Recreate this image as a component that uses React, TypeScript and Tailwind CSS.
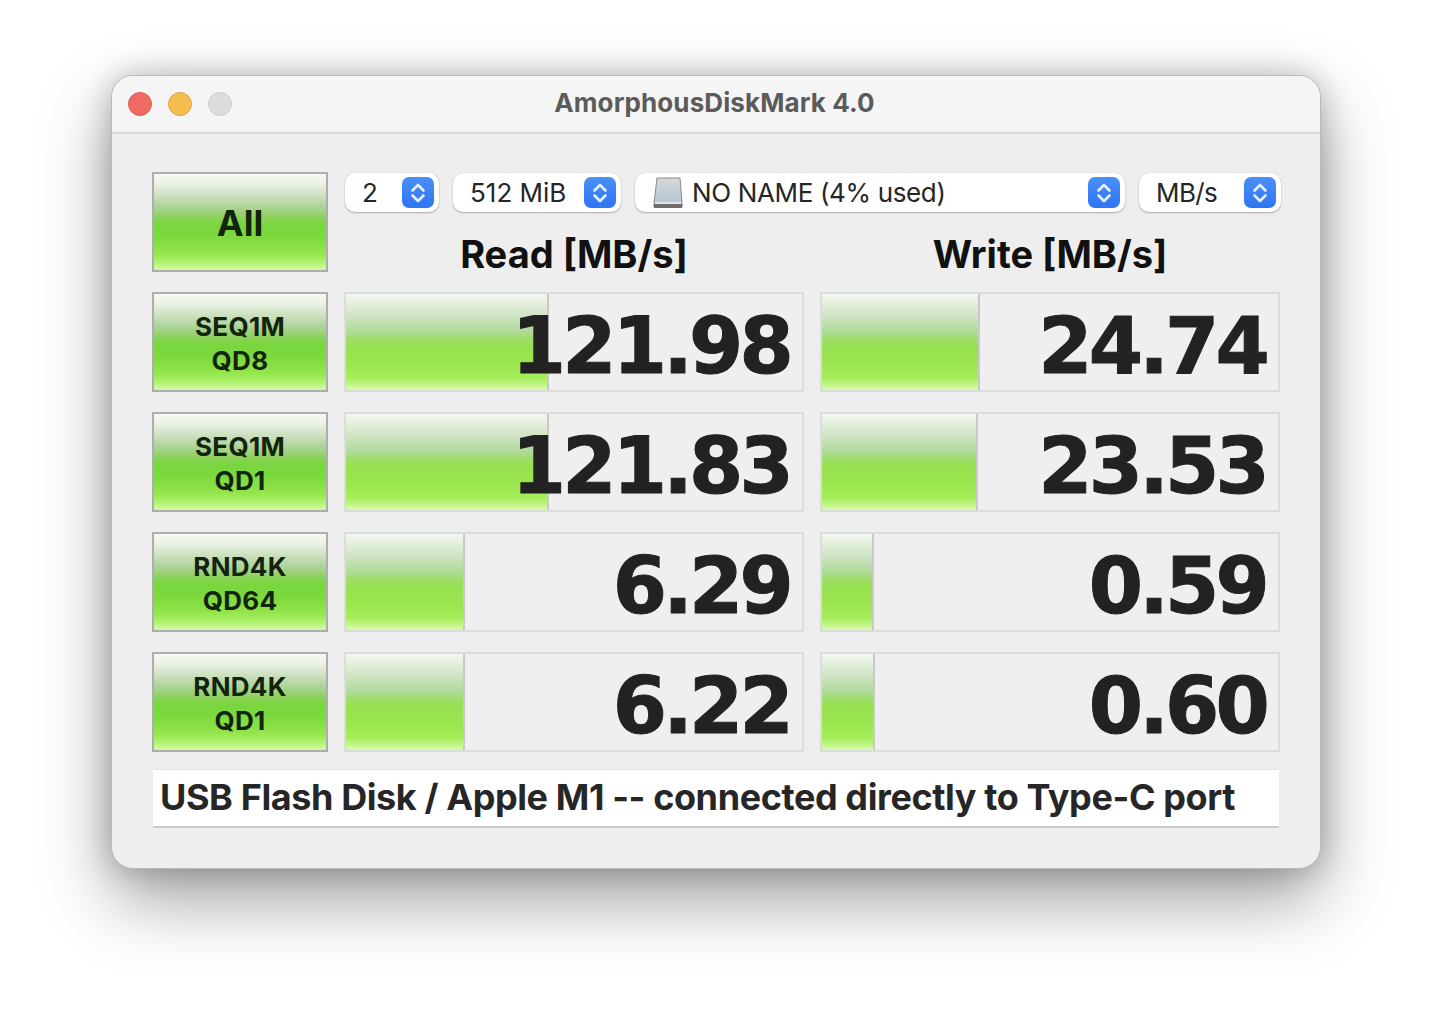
const sans = "font-['Inter','Liberation_Sans',sans-serif]";
const grad =
  "linear-gradient(to bottom,#f6f9f4 0%,#e8f1e2 10%,#c8deba 24%,#add49a 34%,#97d06c 42%,#7ad63e 52%,#7cd83e 64%,#8fe348 80%,#a8ee62 90%,#d8fbaa 100%)";
const barGrad =
  "linear-gradient(to bottom,#f4f7f1 0%,#e4efdd 10%,#cae1bc 26%,#b2da9c 38%,#a0dc70 46%,#96e050 54%,#9ae64e 72%,#a8ee5c 88%,#dafbb0 100%)";

function Stepper() {
  return (
    <span className="w-[32px] h-[31px] rounded-[7px] bg-gradient-to-b from-[#4a90f8] to-[#2f74f2] flex items-center justify-center">
      <svg width="20" height="26" viewBox="0 0 20 26" fill="none" stroke="#e6f0ff" strokeWidth="2.6" strokeLinecap="round" strokeLinejoin="round">
        <path d="M4.5 10.5 L10 5 L15.5 10.5" />
        <path d="M4.5 15.5 L10 21 L15.5 15.5" />
      </svg>
    </span>
  );
}

function Select({ w, pl, children }: { w: string; pl: string; children: React.ReactNode }) {
  return (
    <div className={`${w} ${pl} h-[39px] bg-white rounded-[10px] shadow-[0_1px_2px_rgba(0,0,0,0.28),0_0_1px_rgba(0,0,0,0.12)] flex items-center justify-between pr-[5px] text-[26px] text-[#262626]`}>
      <span className="flex items-center whitespace-nowrap">{children}</span>
      <Stepper />
    </div>
  );
}

function Btn({ a, b, big }: { a: string; b?: string; big?: boolean }) {
  return (
    <div
      className={`h-[100px] w-[176px] border-2 border-[#adadad] flex flex-col items-center justify-center font-bold text-[#12240c] ${big ? "text-[36px] pt-[2px]" : "text-[26px] leading-[34px] pt-[4px] tracking-[0.3px]"}`}
      style={{ backgroundImage: grad }}
    >
      <span>{a}</span>
      {b && <span>{b}</span>}
    </div>
  );
}

function Meter({ bar, value }: { bar: number; value: string }) {
  return (
    <div className="relative h-[100px] w-[460px] bg-[#efefef] border-2 border-[#dcdcdc]">
      <div
        className="absolute left-0 top-0 bottom-0 border-r-2 border-[#c9c9c9]"
        style={{ width: bar, backgroundImage: barGrad }}
      />
      <div className="relative h-full flex items-center justify-end pr-[12px] pt-[8px] font-['DejaVu_Sans',sans-serif] font-bold text-[78px] leading-none text-[#222222] tracking-[-3.8px] [-webkit-text-stroke:1px_#222222]">
        {value}
      </div>
    </div>
  );
}

function Row({ a, b, r, rw, w, ww }: { a: string; b: string; r: string; rw: number; w: string; ww: number }) {
  return (
    <div className="flex gap-4">
      <Btn a={a} b={b} />
      <Meter bar={rw} value={r} />
      <Meter bar={ww} value={w} />
    </div>
  );
}

export default function App() {
  return (
    <div className={`${sans} w-[1432px] h-[1016px] bg-white pt-[75px] pl-[111px] overflow-hidden`}>
      <div className="w-[1210px] h-[794px] rounded-[22px] bg-[#eeeeee] border border-[#b9b9b9] shadow-[0_30px_70px_rgba(0,0,0,0.38),0_0_30px_rgba(0,0,0,0.22)] overflow-hidden">
        <div className="relative h-[58px] bg-[#f5f5f5] border-b-2 border-[#d8d8d8] flex items-center justify-center">
          <div className="absolute left-[16px] top-[16px] flex gap-[16px]">
            <span className="w-[24px] h-[24px] rounded-full bg-[#f06a61] border border-[#dc5a52]" />
            <span className="w-[24px] h-[24px] rounded-full bg-[#f6bd4f] border border-[#dfa63f]" />
            <span className="w-[24px] h-[24px] rounded-full bg-[#dcdcdc] border border-[#cccccc]" />
          </div>
          <span className="text-[26px] font-bold text-[#5b5b5b] -mt-[3px] mr-[3px] tracking-[0.1px]">AmorphousDiskMark 4.0</span>
        </div>
        <div className="pl-[40px] pt-[38px] flex flex-col gap-5">
          <div className="flex gap-4 h-[100px]">
            <Btn a="All" big />
            <div className="flex flex-col">
              <div className="flex gap-[14px] pl-[1px] mt-[1px]">
                <Select w="w-[94px]" pl="pl-[17px]">2</Select>
                <Select w="w-[168px]" pl="pl-[17px]">512 MiB</Select>
                <Select w="w-[490px]" pl="pl-[17px]">
                  <svg width="32" height="34" viewBox="0 0 32 34" className="mr-[8px]">
                    <defs>
                      <linearGradient id="d" x1="0" y1="0" x2="0" y2="1">
                        <stop offset="0" stopColor="#d8d8d8" />
                        <stop offset="1" stopColor="#b4c6d6" />
                      </linearGradient>
                    </defs>
                    <path d="M5 2 H28 L30 27 H2 Z" fill="url(#d)" stroke="#8a8a8a" strokeWidth="1" />
                    <rect x="1.5" y="27" width="29" height="5" rx="1.5" fill="#6f6f6f" />
                    <rect x="3" y="26" width="26" height="2" fill="#e6e6e6" />
                  </svg>
                  <span className="tracking-[-0.35px]">NO NAME (4% used)</span>
                </Select>
                <Select w="w-[142px]" pl="pl-[17px]"><span className="tracking-[-0.6px]">MB/s</span></Select>
              </div>
              <div className="flex gap-4 mt-[19px]">
                <div className="w-[460px] text-center text-[38px] leading-[46px] font-bold text-[#111111] tracking-[0px]">Read [MB/s]</div>
                <div className="w-[460px] text-center text-[38px] leading-[46px] font-bold text-[#111111] tracking-[0px]">Write [MB/s]</div>
              </div>
            </div>
          </div>
          <Row a="SEQ1M" b="QD8" r="121.98" rw={203} w="24.74" ww={158} />
          <Row a="SEQ1M" b="QD1" r="121.83" rw={203} w="23.53" ww={156} />
          <Row a="RND4K" b="QD64" r="6.29" rw={119} w="0.59" ww={52} />
          <Row a="RND4K" b="QD1" r="6.22" rw={119} w="0.60" ww={53} />
          <div className="-mt-[3px] ml-[1px] w-[1126px] h-[59px] bg-white border-t border-t-[#e2e2e2] border-b-2 border-b-[#c8c8c8] pl-[7px] pb-[2px] flex items-center text-[36px] font-bold text-[#262626] tracking-[-0.4px] whitespace-nowrap">
            USB Flash Disk / Apple M1 -- connected directly to Type-C port
          </div>
        </div>
      </div>
    </div>
  );
}
